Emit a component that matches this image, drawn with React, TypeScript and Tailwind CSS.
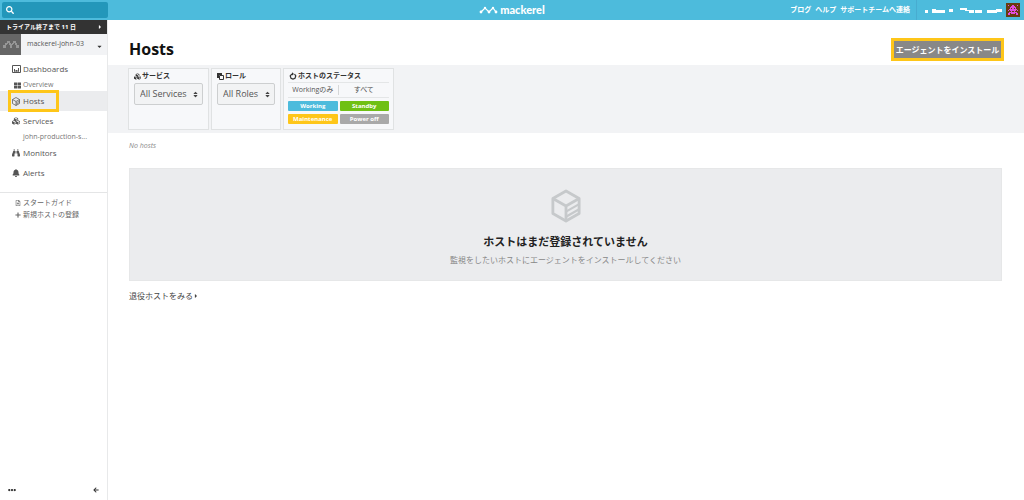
import type { ReactNode } from "react";
import {
  FaArrowLeft,
  FaBell,
  FaBinoculars,
  FaCaretDown,
  FaCaretRight,
  FaCubes,
  FaEllipsisH,
  FaPlus,
  FaRegFileAlt,
  FaSearch,
  FaSort,
  FaThLarge,
} from "react-icons/fa";

const avatar = [
  ".#...##...#.",
  "....####....",
  "...######...",
  "...#.##.#...",
  "..########..",
  ".#.######.#.",
  "....#..#....",
  "..########..",
  ".##.####.##.",
  ".##......##.",
];

const orgMark = [
  "....###...###...",
  "....###...###...",
  "..###.##.##.##..",
  "..##..####..##..",
  "###....##....###",
  "###....##....###",
  "###....##....###",
];

function Pixels({ rows, color }: { rows: string[]; color: string }) {
  return (
    <g fill={color}>
      {rows.map((row, y) =>
        [...row].map((cell, x) =>
          cell === "#" ? <rect height="1" key={`${x}-${y}`} width="1" x={x} y={y} /> : null,
        ),
      )}
    </g>
  );
}

function HostIcon({ className }: { className: string }) {
  return (
    <svg
      className={className}
      fill="none"
      stroke="currentColor"
      strokeLinejoin="round"
      strokeWidth="3"
      viewBox="0 0 32 36"
    >
      <path d="M16 2 30 10v16l-14 8L2 26V10z" />
      <path d="M2 10l14 8 14-8M16 18v16" />
      <path d="M16 24l14-8M16 29.500l14-8" strokeWidth="2.4" />
    </svg>
  );
}

function DashboardIcon() {
  return (
    <svg className="h-2 w-[9px] shrink-0" fill="none" stroke="currentColor" viewBox="0 0 9 8">
      <path d="M.5.5h8v7h-8z" />
      <path d="M2.5 4v2.5M4.5 5v1.5M6.5 3v3.5M2 6h5" />
    </svg>
  );
}

function RoleIcon() {
  return (
    <svg className="size-[7px]" viewBox="0 0 7 7">
      <path d="M0 0h5v2H2v3H0z" fill="currentColor" />
      <path d="M2.5 2.5h4v4h-4z" fill="none" stroke="currentColor" />
    </svg>
  );
}

function StatusIcon() {
  return (
    <svg className="size-2" fill="none" stroke="currentColor" strokeWidth="1.2" viewBox="0 0 8 8">
      <path d="M5.500 2 6.800 3.800 6 6.200 4 7 2 6.200 1.200 3.800 3 2" />
      <path d="M3 .2v3.400L5 2z" fill="currentColor" stroke="none" />
    </svg>
  );
}

function NavItem({ icon, children }: { icon: ReactNode; children: ReactNode }) {
  return (
    <a className="flex h-5 items-center gap-[3px] pl-3 text-[8px] text-[#555]" href="#">
      <span className="flex w-2 justify-center">{icon}</span>
      {children}
    </a>
  );
}

function Filter({
  id,
  icon,
  label,
  value,
  width,
}: {
  id: string;
  icon: ReactNode;
  label: string;
  value: string;
  width: string;
}) {
  return (
    <div className="h-[62px] border border-[#e0e2e3] bg-[#f7f8fa] px-[5px] pt-px">
      <label
        className="flex h-3 items-center gap-px text-[7px] font-bold text-[#333]"
        htmlFor={id}
      >
        {icon}
        {label}
      </label>
      <div className={`relative mt-px ${width}`}>
        <select
          className="block h-[22px] w-full appearance-none rounded-xs border border-[#cdcfd0] bg-[#f2f3f4] px-[5px] text-[9px] text-[#555]"
          id={id}
        >
          <option>{value}</option>
        </select>
        <FaSort className="pointer-events-none absolute top-2 right-1 size-[7px] text-[#444]" />
      </div>
    </div>
  );
}

export default function App() {
  return (
    <div className="flex min-h-screen flex-col bg-white font-['Open_Sans','Noto_Sans_CJK_JP',sans-serif] text-[#333]">
      <header className="grid h-5 grid-cols-3 items-center bg-[#4dbbdc] text-white">
        <label className="ml-[2px] flex h-4 w-[106px] items-center rounded-xs bg-[#2397ba] pl-1">
          <FaSearch className="size-2" />
          <input aria-label="Search" className="w-20 bg-transparent pl-1 text-[8px] outline-none" />
        </label>
        <a className="flex items-center justify-center gap-[2px]" href="#">
          <svg className="h-2 w-[19px]" viewBox="0 0 19 8">
            <path d="M2 6 6 2l4 4 4-4 3 4" fill="none" stroke="white" strokeWidth="1.2" />
            <g fill="white">
              <circle cx="2" cy="6" r="1.4" />
              <circle cx="6" cy="2" r="1.2" />
              <circle cx="10" cy="6" r="1.4" />
              <circle cx="14" cy="2" r="1.2" />
              <circle cx="17" cy="6" r="1.4" />
            </g>
          </svg>
          <span className="font-['Lato',sans-serif] text-[11px] leading-4 font-black">mackerel</span>
        </a>
        <nav className="flex h-full items-center justify-end text-[7px] font-bold whitespace-nowrap">
          <a className="mr-1" href="#">ブログ</a>
          <a className="mr-1" href="#">ヘルプ</a>
          <a className="mr-[6px]" href="#">サポートチームへ連絡</a>
          <span className="h-full w-px bg-[#48acd0]" />
          <svg className="mt-[2px] ml-2 h-2 w-20" fill="white" viewBox="0 0 80 8">
            <path d="M0 3h3v3H0zM7 2h4v1h9v3H7zM24 2h4v3h-4zM35 1h7v2h7v3h-5V4h-4V3h-5zM50 3h7v3h-7zM62 3h9V2h6v3h-5v1H62z" />
          </svg>
          <svg className="mr-1 ml-px size-[14px]" shapeRendering="crispEdges" viewBox="-1 -2 14 14">
            <rect fill="#693c10" height="14" width="14" x="-1" y="-2" />
            <Pixels color="#e04ee0" rows={avatar} />
          </svg>
        </nav>
      </header>
      <div className="flex grow">
        <aside className="flex w-[108px] shrink-0 flex-col border-r border-[#e8e9ea]">
          <a className="flex h-[14px] items-center justify-between bg-[#333] pr-1 pl-[6px] text-[6px] font-bold text-white" href="#">
            トライアル終了まで 11 日
            <FaCaretRight className="size-[6px]" />
          </a>
          <button className="flex h-[21px] items-center bg-[#f2f3f5] text-[7px] text-[#555]">
            <span className="flex h-full w-[21px] items-center justify-center bg-[#666]">
              <svg className="h-[7px] w-4" shapeRendering="crispEdges" viewBox="0 0 16 7">
                <Pixels color="#969696" rows={orgMark} />
              </svg>
            </span>
            <span className="ml-[6px] grow text-left">mackerel-john-03</span>
            <FaCaretDown className="mt-1 mr-1 size-[7px] text-[#333]" />
          </button>
          <nav className="flex flex-col pt-1">
            <NavItem icon={<DashboardIcon />}>Dashboards</NavItem>
            <a className="flex h-3 items-center gap-[2px] pl-[14px] text-[7px] text-[#777]" href="#">
              <FaThLarge className="size-[7px] text-[#555]" />
              Overview
            </a>
            <div className="relative bg-[#ebecee]">
              <NavItem icon={<HostIcon className="size-[9px]" />}>Hosts</NavItem>
              <span className="pointer-events-none absolute -top-px left-2 h-[22px] w-[51px] border-3 border-[#fec619]" />
            </div>
            <NavItem icon={<FaCubes />}>Services</NavItem>
            <a className="flex h-3 items-center pl-[23px] text-[7px] text-[#777]" href="#">john-production-s...</a>
            <NavItem icon={<FaBinoculars />}>Monitors</NavItem>
            <NavItem icon={<FaBell />}>Alerts</NavItem>
          </nav>
          <div className="mt-[9px] flex flex-col border-t border-[#e4e5e6] pt-1 text-[7px] text-[#666]">
            <a className="flex h-3 items-center gap-[2px] pl-[15px]" href="#">
              <FaRegFileAlt className="size-[6px]" />
              スタートガイド
            </a>
            <a className="flex h-3 items-center gap-[2px] pl-[15px]" href="#">
              <FaPlus className="size-[6px]" />
              新規ホストの登録
            </a>
          </div>
          <div className="mt-auto flex h-5 items-center justify-between px-2">
            <button aria-label="More"><FaEllipsisH className="size-2" /></button>
            <button aria-label="Collapse"><FaArrowLeft className="size-[6px]" /></button>
          </div>
        </aside>
        <main className="min-w-0 grow">
          <div className="flex h-[45px] items-center justify-between pr-5 pl-[21px]">
            <h1 className="mt-3 text-[16px] font-bold text-[#111]">Hosts</h1>
            <button className="mt-[14px] h-[23px] w-[113px] border-3 border-[#fec619] bg-[#888] text-[8px] font-bold whitespace-nowrap text-white">
              <span className="flex justify-center">エージェントをインストール</span>
            </button>
          </div>
          <section className="flex h-[68px] items-center gap-[2px] bg-[#f2f3f5] pl-5">
            <Filter icon={<FaCubes />} id="service" label="サービス" value="All Services" width="w-[69px]" />
            <Filter icon={<RoleIcon />} id="role" label="ロール" value="All Roles" width="w-[58px]" />
            <div className="h-[62px] w-[111px] border border-[#e0e2e3] bg-[#f7f8fa] px-1 pt-px">
              <h2 className="flex h-3 items-center gap-px pl-px text-[7px] font-bold">
                <StatusIcon />
                ホストのステータス
              </h2>
              <div className="grid grid-cols-2 border-y border-[#e4e6e7] text-[7px] text-[#555]">
                <button className="my-[2px] h-[10px] border-r border-[#d5d7d8] leading-[10px]">Workingのみ</button>
                <button className="my-[2px] h-[10px] leading-[10px]">すべて</button>
              </div>
              <div className="mt-[3px] grid grid-cols-2 gap-x-[2px] gap-y-[3px] text-[6px] leading-[10px] font-bold text-white">
                <button className="h-[10px] rounded-[1px] bg-[#4dbbdc]">Working</button>
                <button className="h-[10px] rounded-[1px] bg-[#6fc014]">Standby</button>
                <button className="h-[10px] rounded-[1px] bg-[#fec619]">Maintenance</button>
                <button className="h-[10px] rounded-[1px] bg-[#a9a9a9]">Power off</button>
              </div>
            </div>
          </section>
          <section className="pt-[7px] pr-[22px] pl-[21px]">
            <p className="text-[7px] leading-3 text-[#888] italic">No hosts</p>
            <div className="mt-4 flex h-[113px] flex-col items-center border border-[#e6e7e8] bg-[#ebecee] pt-5">
              <HostIcon className="h-[34px] w-[30px] text-[#c6c9cb]" />
              <h2 className="mt-[11px] text-[11px] leading-4 font-bold text-[#222]">
                ホストはまだ登録されていません
              </h2>
              <p className="mt-1 text-[8px] leading-3 text-[#888]">
                監視をしたいホストにエージェントをインストールしてください
              </p>
            </div>
            <a className="mt-[9px] inline-flex items-center text-[8px] leading-3 text-[#444]" href="#">
              退役ホストをみる
              <FaCaretRight className="size-[6px]" />
            </a>
          </section>
        </main>
      </div>
    </div>
  );
}
